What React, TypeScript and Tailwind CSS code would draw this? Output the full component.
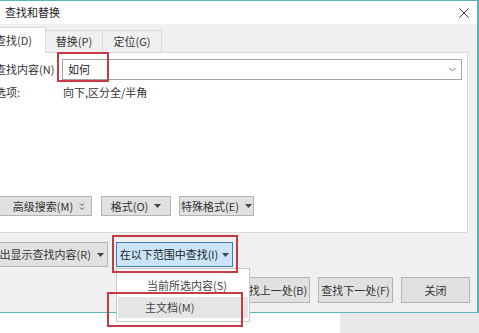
import React from 'react';

const font = { fontFamily: '"Noto Sans CJK SC", "Noto Sans", sans-serif' };

function Caret() {
  return (
    <svg width="7" height="4" viewBox="0 0 7 4" className="shrink-0">
      <polygon points="0,0 7,0 3.5,4" fill="#444" />
    </svg>
  );
}

function MoreIcon() {
  return (
    <svg width="6" height="9" viewBox="0 0 6 9" className="shrink-0">
      <path d="M1 1.5 L3 3.5 L5 1.5 M1 5.5 L3 7.5 L5 5.5" stroke="#555" strokeWidth="1" fill="none" />
    </svg>
  );
}

function Btn({ w, children, className = '' }: { w: string; children: React.ReactNode; className?: string }) {
  return (
    <div
      className={`${w} h-full shrink-0 flex items-center justify-center gap-[6px] bg-[#e1e1e1] border border-[#b4b4b4] text-[11px] text-[#333] ${className}`}
    >
      {children}
    </div>
  );
}

export default function App() {
  return (
    <div className="relative w-[479px] h-[333px] overflow-hidden bg-white flex flex-col" style={font}>
      {/* dialog window, left part cut off */}
      <div className="ml-[-8px] w-[487px] h-[313px] shrink-0 flex flex-col border-t border-r-2 border-b border-[#5bb4b9]">
        {/* title bar */}
        <div className="h-[23px] shrink-0 bg-white flex items-center justify-between pl-[13px] pr-[8px]">
          <span className="text-[11px] text-[#222]">查找和替换</span>
          <svg width="10" height="10" viewBox="0 0 10 10">
            <path d="M0.5 0.5 L9.5 9.5 M9.5 0.5 L0.5 9.5" stroke="#333" strokeWidth="1" />
          </svg>
        </div>

        {/* body */}
        <div className="flex-1 bg-[#f0f0f0] flex flex-col pr-[9px]">
          {/* tabs */}
          <div className="flex items-end pt-[3px] h-[28px] shrink-0">
            <div className="relative z-10 -mb-px h-[26px] w-[54px] bg-white border-t border-r border-[#d9d9d9] flex items-center pl-[3px] text-[11px] text-[#333]">
              查找(D)
            </div>
            <div className="h-[22px] w-[57px] border-t border-r border-[#d9d9d9] flex items-center justify-center text-[11px] text-[#333]">
              替换(P)
            </div>
            <div className="h-[22px] w-[59px] border-t border-r border-[#d9d9d9] flex items-center justify-center text-[11px] text-[#333]">
              定位(G)
            </div>
          </div>

          {/* tab panel */}
          <div className="h-[181px] shrink-0 bg-white border border-[#d9d9d9] flex flex-col pt-[6px] pl-[2px]">
            <div className="flex items-center h-[21px]">
              <span className="w-[67px] shrink-0 text-[11px] text-[#333] whitespace-nowrap">查找内容(N)</span>
              <div className="w-[400px] h-full border border-[#a3a3a3] flex items-center justify-between pl-[5px] pr-[5px]">
                <span className="text-[11px] text-[#222]">如何</span>
                <svg width="7" height="5" viewBox="0 0 7 5">
                  <path d="M0.5 1 L3.5 4 L6.5 1" stroke="#777" strokeWidth="1" fill="none" />
                </svg>
              </div>
            </div>
            <div className="flex items-center h-[16px] mt-[4px] text-[11px] text-[#333]">
              <span className="w-[68px] shrink-0">选项:</span>
              <span>向下,区分全/半角</span>
            </div>

            <div className="mt-auto mb-[16px] h-[20px] flex ml-[1px] gap-[9px]">
              <Btn w="w-[96px]" className="pl-[10px]">
                高级搜索(M) <MoreIcon />
              </Btn>
              <Btn w="w-[70px]">
                格式(O) <Caret />
              </Btn>
              <div className="-ml-px">
                <Btn w="w-[75px]" className="gap-[3px]">
                  特殊格式(E) <Caret />
                </Btn>
              </div>
            </div>
          </div>

          {/* lower buttons */}
          <div className="mt-[9px] h-[25px] flex gap-[8px]">
            <Btn w="w-[116px]" className="justify-end pr-[3px] gap-[3px] overflow-hidden whitespace-nowrap">
              突出显示查找内容(R) <Caret />
            </Btn>
            <div className="w-[117px] h-full flex items-center justify-center gap-[4px] bg-[#cce4f7] border border-[#3d7fb5] text-[11px] text-[#222] whitespace-nowrap">
              在以下范围中查找(I) <Caret />
            </div>
          </div>
          <div className="mt-[10px] h-[26px] flex justify-end gap-[8px] -mr-[2px]">
            <Btn w="w-[75px]">查找上一处(B)</Btn>
            <Btn w="w-[75px]">查找下一处(F)</Btn>
            <Btn w="w-[69px]">关闭</Btn>
          </div>
        </div>
      </div>

      {/* below the dialog */}
      <div className="flex-1 flex">
        <div className="w-[340px] bg-white" />
        <div className="flex-1 bg-[#e9e9e9]" />
      </div>

      {/* dropdown menu */}
      <div className="absolute left-[116px] top-[268px] w-[134px] h-[54px] bg-white border border-[#c8c8c8] flex flex-col pt-[5px] px-[1px] z-20">
        <div className="h-[22px] flex items-center pl-[29px] text-[11px] text-[#444]">当前所选内容(S)</div>
        <div className="mt-px h-[21px] bg-[#e5e5e5] flex items-center pl-[27px] text-[11px] text-[#444]">主文档(M)</div>
      </div>

      {/* red highlight boxes */}
      <div className="absolute left-[57px] top-[52px] w-[52px] h-[30px] border-2 border-[#c53a45] z-30" />
      <div className="absolute left-[112px] top-[235px] w-[126px] h-[38px] border-2 border-[#c53a45] z-30" />
      <div className="absolute left-[107px] top-[292px] w-[136px] h-[35px] border-2 border-[#c53a45] z-30" />
    </div>
  );
}
